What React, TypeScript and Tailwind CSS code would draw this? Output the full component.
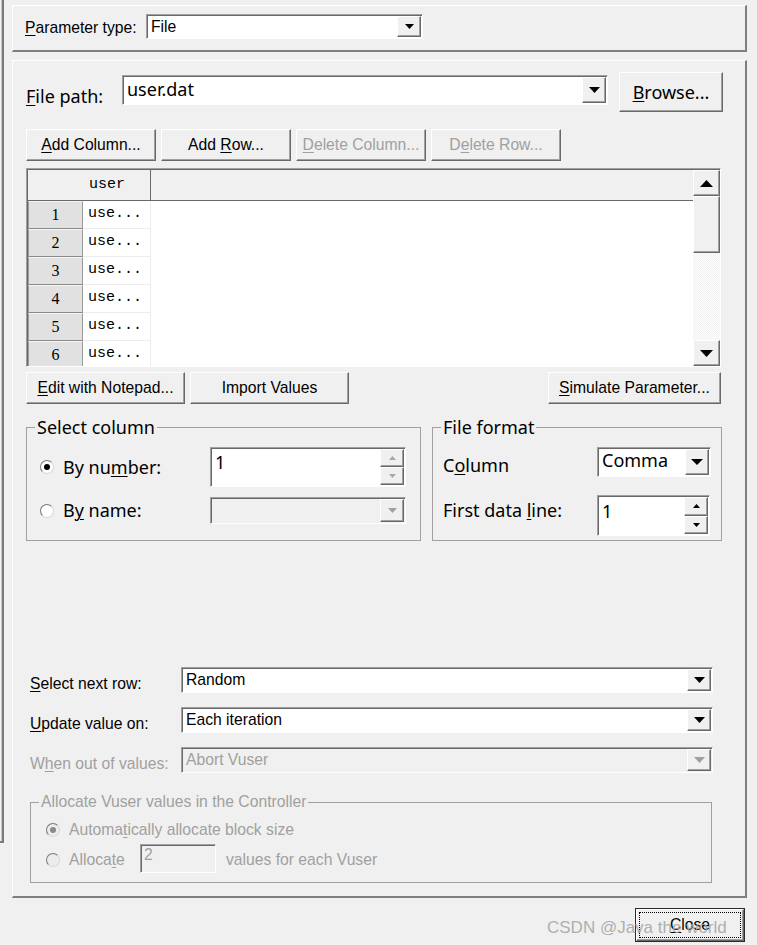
import React from "react";

const LIB = "font-[family-name:'Liberation_Sans',Arial,sans-serif] text-[15.7px]";
const NOTO = "font-[family-name:'Noto_Sans',sans-serif] text-[18px]";
const MONO = "font-[family-name:'Liberation_Mono',monospace]";
const SERIF = "font-[family-name:'Liberation_Serif',serif]";
const RAISED =
  "border border-t-white border-l-white border-r-[#696969] border-b-[#696969] shadow-[inset_-1px_-1px_0_#a0a0a0]";
const SUNKEN =
  "border border-t-[#a0a0a0] border-l-[#a0a0a0] border-r-white border-b-white shadow-[inset_1px_1px_0_#696969]";

function Tri({ up = false, w = 9, h = 5, color = "#000" }: { up?: boolean; w?: number; h?: number; color?: string }) {
  const pts = up ? `0,${h} ${w},${h} ${w / 2},0` : `0,0 ${w},0 ${w / 2},${h}`;
  return (
    <svg width={w} height={h} viewBox={`0 0 ${w} ${h}`} className="block">
      <polygon points={pts} fill={color} />
    </svg>
  );
}

function U({ children }: { children: React.ReactNode }) {
  return <span className="underline underline-offset-[2px] decoration-1">{children}</span>;
}

function Btn({
  className = "",
  disabled = false,
  font = LIB,
  children,
}: {
  className?: string;
  disabled?: boolean;
  font?: string;
  children: React.ReactNode;
}) {
  return (
    <div
      className={`${RAISED} bg-[#f0f0f0] flex items-center justify-center shrink-0 whitespace-nowrap ${font} ${
        disabled ? "text-[#a0a0a0]" : "text-black"
      } ${className}`}
    >
      {children}
    </div>
  );
}

function Combo({
  className,
  value,
  font,
  disabled = false,
  btnW = "w-[24px]",
  tw = 9,
  th = 5,
  textClass = "",
}: {
  className: string;
  value?: string;
  font: string;
  disabled?: boolean;
  btnW?: string;
  tw?: number;
  th?: number;
  textClass?: string;
}) {
  return (
    <div className={`${SUNKEN} flex shrink-0 ${disabled ? "bg-[#f0f0f0]" : "bg-white"} ${className}`}>
      <div
        className={`flex-1 min-w-0 flex items-center pl-[4px] whitespace-nowrap ${font} ${
          disabled ? "text-[#a0a0a0]" : "text-black"
        } ${textClass}`}
      >
        {value}
      </div>
      <div className={`${RAISED} ${btnW} bg-[#f0f0f0] flex items-center justify-center my-[1px] mr-[1px]`}>
        <Tri w={tw} h={th} color={disabled ? "#a0a0a0" : "#000"} />
      </div>
    </div>
  );
}

function Spin({
  className,
  value,
  textClass,
  arrow = "#000",
}: {
  className: string;
  value: string;
  textClass: string;
  arrow?: string;
}) {
  return (
    <div className={`${SUNKEN} flex shrink-0 bg-white ${className}`}>
      <div className={`flex-1 pl-[4px] ${NOTO} ${textClass}`}>{value}</div>
      <div className="flex flex-col w-[24px] my-[1px] mr-[1px]">
        <div className={`${RAISED} flex-1 bg-[#f0f0f0] flex items-center justify-center`}>
          <Tri up w={7} h={4} color={arrow} />
        </div>
        <div className={`${RAISED} flex-1 bg-[#f0f0f0] flex items-center justify-center`}>
          <Tri w={7} h={4} color={arrow} />
        </div>
      </div>
    </div>
  );
}

function Radio({ checked = false, disabled = false }: { checked?: boolean; disabled?: boolean }) {
  return (
    <div
      className={`w-[14px] h-[14px] rounded-full shrink-0 border border-t-[#7a7a7a] border-l-[#7a7a7a] border-r-[#d8d8d8] border-b-[#d8d8d8] flex items-center justify-center ${
        disabled ? "bg-[#ececec]" : "bg-white"
      }`}
    >
      {checked && <div className={`w-[6px] h-[6px] rounded-full ${disabled ? "bg-[#8a8a8a]" : "bg-black"}`} />}
    </div>
  );
}

function Table() {
  const rows = [1, 2, 3, 4, 5, 6];
  return (
    <div className={`${SUNKEN} w-[695px] h-[199px] flex bg-white shrink-0`}>
      <div className="flex-1 flex flex-col overflow-hidden pl-[1px] pt-[1px]">
        <div className="h-[31px] flex bg-[#f0f0f0] border-b border-b-[#696969] shrink-0">
          <div className="w-[55px]" />
          <div className={`w-[68px] border-r border-r-[#696969] pl-[6px] flex items-center ${MONO} text-[15px]`}>
            user
          </div>
          <div className="flex-1" />
        </div>
        {rows.map((n) => (
          <div key={n} className="h-[28px] flex shrink-0">
            <div
              className={`w-[55px] bg-[#e1e1e1] border border-t-[#f4f4f4] border-l-[#9a9a9a] border-r-[#9a9a9a] border-b-[#8a8a8a] flex items-center justify-center ${SERIF} text-[16px]`}
            >
              {n}
            </div>
            <div
              className={`w-[68px] border-r border-b border-r-[#ececec] border-b-[#ececec] pl-[5px] flex items-center ${MONO} text-[15px]`}
            >
              use...
            </div>
          </div>
        ))}
      </div>
      <div className="w-[27px] flex flex-col pt-[1px]">
        <div className={`${RAISED} h-[26px] bg-[#f0f0f0] flex items-center justify-center`}>
          <Tri up w={13} h={7} />
        </div>
        <div className={`${RAISED} h-[57px] bg-[#f0f0f0]`} />
        <div className="flex-1 bg-[image:repeating-conic-gradient(#ffffff_0%_25%,#f0f0f0_0%_50%)] bg-[length:2px_2px]" />
        <div className={`${RAISED} h-[26px] bg-[#f0f0f0] flex items-center justify-center`}>
          <Tri w={13} h={7} />
        </div>
      </div>
    </div>
  );
}

export default function App() {
  return (
    <div className="relative w-[757px] h-[945px] bg-[#f0f0f0] overflow-hidden flex text-black">
      <div className="w-[4px] h-[843px] shrink-0 border-r-2 border-b-2 border-r-[#7a7a7a] border-b-[#7a7a7a] shadow-[inset_-1px_0_0_#c8c8c8]" />
      <div className="ml-[8px] w-[735px] flex flex-col shrink-0">
        {/* Top panel */}
        <div className="mt-[5px] h-[47px] border-t border-l border-r-2 border-b-2 border-t-white border-l-white border-r-[#7f7f7f] border-b-[#7f7f7f] flex items-start pl-[12px] pt-[8px]">
          <div className={`w-[121px] h-[25px] flex items-center pt-[2px] ${LIB}`}>
            <span>
              <U>P</U>arameter type:
            </span>
          </div>
          <Combo className="w-[277px] h-[25px]" value="File" font={LIB} />
        </div>

        {/* Main panel */}
        <div className="mt-[8px] h-[838px] border-t border-l border-r-2 border-b-2 border-t-white border-l-white border-r-[#7f7f7f] border-b-[#7f7f7f] pl-[13px] pt-[11px]">
          <div className="w-[695px] flex flex-col">
            {/* File path */}
            <div className="flex items-start h-[40px]">
              <div className={`w-[96px] shrink-0 mt-[12px] leading-[25px] ${NOTO}`}>
                <U>F</U>ile path:
              </div>
              <Combo
                className="w-[486px] h-[30px] mt-[3px]"
                value="user.dat"
                font={NOTO}
                tw={11}
                th={6}
                textClass="pl-[4px] pb-[2px]"
              />
              <Btn className="ml-[11px] w-[104px] h-[40px]" font={`${NOTO} text-[17px]`}>
                <span>
                  <U>B</U>rowse...
                </span>
              </Btn>
            </div>

            {/* Button row */}
            <div className="mt-[17px] flex gap-[5px]">
              <Btn className="w-[130px] h-[32px]">
                <span>
                  <U>A</U>dd Column...
                </span>
              </Btn>
              <Btn className="w-[130px] h-[32px]">
                <span>
                  Add <U>R</U>ow...
                </span>
              </Btn>
              <Btn className="w-[130px] h-[32px]" disabled>
                <span>
                  <U>D</U>elete Column...
                </span>
              </Btn>
              <Btn className="w-[130px] h-[32px]" disabled>
                <span>
                  D<U>e</U>lete Row...
                </span>
              </Btn>
            </div>

            {/* Table */}
            <div className="mt-[7px]">
              <Table />
            </div>

            {/* Bottom buttons */}
            <div className="mt-[5px] flex">
              <Btn className="w-[159px] h-[32px]">
                <span>
                  <U>E</U>dit with Notepad...
                </span>
              </Btn>
              <Btn className="ml-[5px] w-[159px] h-[32px]">Import Values</Btn>
              <Btn className="ml-auto w-[173px] h-[32px]">
                <span>
                  <U>S</U>imulate Parameter...
                </span>
              </Btn>
            </div>

            {/* Groups */}
            <div className="mt-[11px] flex">
              <fieldset className="w-[395px] h-[126px] border border-[#a0a0a0] pl-[8px] shrink-0">
                <legend className={`px-[2px] leading-[24px] ${NOTO}`}>Select column</legend>
                <div className="ml-[5px] flex flex-col">
                  <div className="mt-[8px] flex items-center h-[40px]">
                    <div className="w-[170px] flex items-center gap-[9px]">
                      <Radio checked />
                      <span className={NOTO}>
                        By nu<U>m</U>ber:
                      </span>
                    </div>
                    <Spin className="w-[196px] h-[40px]" value="1" textClass="leading-[28px]" arrow="#a8a8a8" />
                  </div>
                  <div className="mt-[10px] flex items-center h-[27px]">
                    <div className="w-[170px] flex items-center gap-[9px]">
                      <Radio />
                      <span className={NOTO}>
                        B<U>y</U> name:
                      </span>
                    </div>
                    <Combo className="w-[196px] h-[27px]" font={NOTO} disabled />
                  </div>
                </div>
              </fieldset>

              <fieldset className="ml-[11px] w-[290px] h-[126px] border border-[#a0a0a0] pl-[8px] shrink-0">
                <legend className={`px-[2px] leading-[24px] ${NOTO}`}>File format</legend>
                <div className="ml-[2px] flex flex-col">
                  <div className="mt-[8px] flex items-start">
                    <div className={`w-[154px] shrink-0 mt-[6px] leading-[24px] ${NOTO}`}>
                      C<U>o</U>lumn
                    </div>
                    <Combo
                      className="w-[114px] h-[30px]"
                      value="Comma"
                      font={NOTO}
                      tw={12}
                      th={6}
                      textClass="pb-[3px]"
                    />
                  </div>
                  <div className="mt-[18px] flex items-start">
                    <div className={`w-[154px] shrink-0 mt-[3px] leading-[24px] ${NOTO}`}>
                      First data <U>l</U>ine:
                    </div>
                    <Spin className="w-[113px] h-[41px]" value="1" textClass="leading-[30px]" />
                  </div>
                </div>
              </fieldset>
            </div>

            {/* Select rows */}
            <div className="mt-[126px] ml-[4px] flex flex-col gap-[14px]">
              <div className="flex items-start h-[26px]">
                <div className={`w-[151px] shrink-0 mt-[8px] leading-[18px] ${LIB}`}>
                  <U>S</U>elect next row:
                </div>
                <Combo className="w-[532px] h-[26px]" value="Random" font={LIB} tw={11} th={6} />
              </div>
              <div className="flex items-start h-[26px]">
                <div className={`w-[151px] shrink-0 mt-[8px] leading-[18px] ${LIB}`}>
                  <U>U</U>pdate value on:
                </div>
                <Combo className="w-[532px] h-[26px]" value="Each iteration" font={LIB} tw={11} th={6} />
              </div>
              <div className="flex items-start h-[26px]">
                <div className={`w-[151px] shrink-0 mt-[8px] leading-[18px] text-[#a0a0a0] ${LIB}`}>
                  W<U>h</U>en out of values:
                </div>
                <Combo className="w-[532px] h-[26px]" value="Abort Vuser" font={LIB} tw={11} th={6} disabled />
              </div>
            </div>

            {/* Allocate group */}
            <fieldset className="mt-[20px] ml-[4px] w-[682px] h-[90px] border border-[#a0a0a0] pl-[8px] text-[#a0a0a0]">
              <legend className={`px-[2px] leading-[18px] ${LIB}`}>Allocate Vuser values in the Controller</legend>
              <div className="ml-[7px] flex flex-col">
                <div className="mt-[9px] h-[20px] flex items-center gap-[9px]">
                  <Radio checked disabled />
                  <span className={LIB}>
                    Automa<U>t</U>ically allocate block size
                  </span>
                </div>
                <div className="mt-[4px] h-[29px] flex items-center">
                  <div className="w-[94px] flex items-center gap-[9px] pt-[3px]">
                    <Radio disabled />
                    <span className={LIB}>
                      Alloca<U>t</U>e
                    </span>
                  </div>
                  <div
                    className={`w-[76px] h-[29px] bg-[#f0f0f0] border border-t-[#a0a0a0] border-l-[#a0a0a0] border-r-white border-b-white shadow-[inset_1px_1px_0_#696969] pl-[3px] leading-[20px] ${LIB}`}
                  >
                    2
                  </div>
                  <span className={`ml-[10px] pt-[2px] ${LIB}`}>values for each Vuser</span>
                </div>
              </div>
            </fieldset>
          </div>
        </div>

        {/* Close */}
        <div className="mt-[10px] flex justify-end pr-[2px]">
          <div className="w-[110px] h-[34px] border border-[#2a2a2a] bg-[#f0f0f0] flex">
            <div className={`${RAISED} flex-1 p-[2px] flex`}>
              <div className={`flex-1 border border-dotted border-[#000] flex items-center justify-center ${LIB}`}>
                <span>
                  <U>C</U>lose
                </span>
              </div>
            </div>
          </div>
        </div>
      </div>

      <div className="absolute left-[547px] top-[915px] z-10 pointer-events-none font-[family-name:'Liberation_Sans',Arial,sans-serif] text-[17px] text-[#a6a6a6]/90 whitespace-nowrap">
        CSDN @Java the world
      </div>
    </div>
  );
}
